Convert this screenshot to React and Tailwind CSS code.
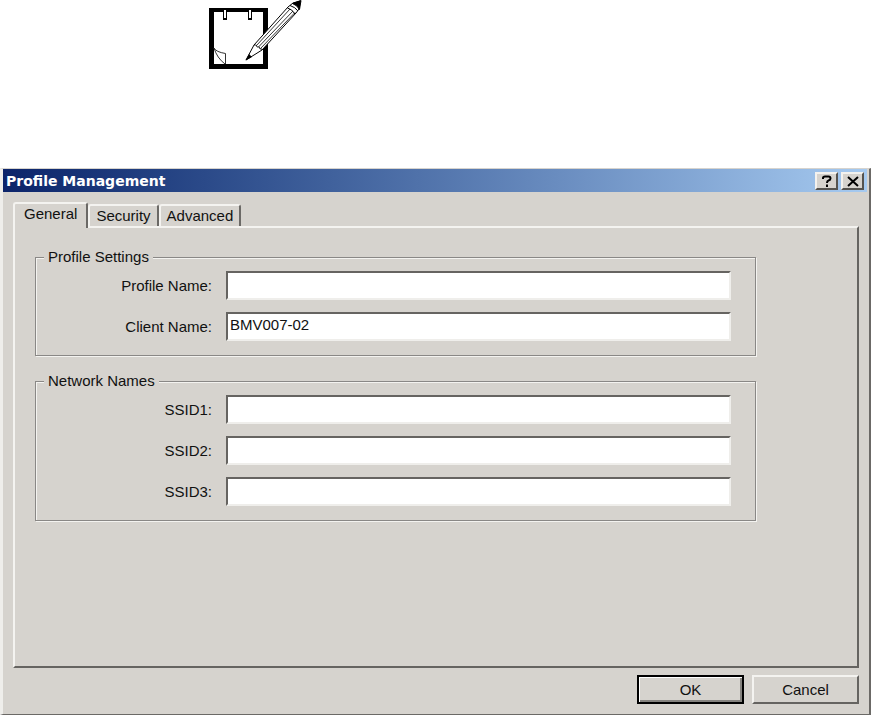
import { useState } from "react";

const TABS = ["General", "Security", "Advanced"];

function NotepadIcon() {
  return (
    <svg
      className="block h-[75px] w-[110px]"
      viewBox="0 0 110 75"
      fill="none"
      aria-hidden="true"
    >
      {/* pad */}
      <path d="M9 8H68V69H9ZM14 12V64H63V12Z" fill="#000" fillRule="evenodd" />
      {/* rings */}
      {[25, 50].map((x) => (
        <g key={x}>
          <path d={`M${x - 1.5} 10V18M${x + 1.5} 10V19`} stroke="#000" />
          <path d={`M${x} 10V18`} stroke="#fff" strokeWidth="2" />
          <path d={`M${x - 2} 19H${x + 2}`} stroke="#000" strokeWidth="2" />
        </g>
      ))}
      {/* folded corner */}
      <path d="M14 48Q16 52 25.5 53.5V64M14 48Q17 58 25 64" stroke="#333" />
      {/* pencil */}
      <path d="M46 60L54 45L88 7L93 3L100 1L99 9L96 13L62 50Z" fill="#fff" stroke="#000" />
      <path d="M56.5 45.5L90 9M58.5 47L93 11M60.5 48.5L95 12.5M54 45Q57 44 57 47Q60 46 60 49Q62 48 62 50" stroke="#000" strokeWidth="0.8" />
      <path d="M87.5 8Q92 9 95 14M90 5.5Q95 7 98 11" stroke="#000" />
      <path d="M92.5 3.5L101 0.5L99.5 9.5Q97 5 92.5 3.5Z" fill="#000" stroke="#000" />
      <path d="M45.5 60.5L49 54L52 57Z" fill="#000" />
    </svg>
  );
}

function TitleButton({ label, children }) {
  return (
    <button
      type="button"
      aria-label={label}
      className="flex h-[18px] w-[23px] items-center justify-center border-2 border-t-[#f4f2ee] border-r-[#55534f] border-b-[#55534f] border-l-[#f4f2ee] bg-[#d6d3ce]"
    >
      {children}
    </button>
  );
}

function Tab({ label, active, onSelect }) {
  return (
    <button
      type="button"
      role="tab"
      aria-selected={active}
      onClick={onSelect}
      className={`rounded-t-[3px] border-2 border-b-0 border-t-[#f4f3f0] border-r-[#6b6966] border-l-[#f4f3f0] bg-[#d6d3ce] ${
        active ? "relative -mb-[2px] h-[26px] px-[9px] pb-1" : "h-[22px] px-[6px]"
      }`}
    >
      {label}
    </button>
  );
}

function Group({ title, children }) {
  return (
    <fieldset className="border border-[#8a8886] pr-6 shadow-[1px_1px_0_#f4f3f0,inset_1px_1px_0_#f4f3f0]">
      <legend className="ml-2 bg-[#d6d3ce] px-1 leading-4">{title}</legend>
      <div className="flex flex-col gap-3 pt-[6px] pb-[14px]">{children}</div>
    </fieldset>
  );
}

function Field({ id, label, defaultValue = "" }) {
  return (
    <div className="flex items-center gap-[14px]">
      <label htmlFor={id} className="w-44 shrink-0 text-right">
        {label}
      </label>
      <input
        id={id}
        type="text"
        defaultValue={defaultValue}
        className="h-[29px] min-w-0 flex-1 border-2 border-t-[#666461] border-r-[#efeeeb] border-b-[#efeeeb] border-l-[#666461] bg-white px-[2px] pb-1 outline-none"
      />
    </div>
  );
}

export default function App() {
  const [tab, setTab] = useState("General");

  return (
    <div className="flex min-h-screen flex-col bg-white font-['Liberation_Sans',Arial,sans-serif] text-[15px] leading-5 text-[#111]">
      <header className="h-[168px] pl-[200px]">
        <NotepadIcon />
      </header>

      <main className="mr-[2px] flex flex-1 flex-col border-t border-r-2 border-b border-l-3 border-t-[#d6d3ce] border-r-[#6b6966] border-b-[#6b6966] border-l-[#efeeeb] bg-[#d6d3ce]">
        <div className="mr-[2px] flex h-[23px] items-center gap-[3px] bg-linear-to-r from-[#0c246a] to-[#a6caf0] pr-[3px] pl-[3px]">
          <h1 className="flex-1 font-['DejaVu_Sans',Verdana,sans-serif] text-[14px] font-bold text-white">
            Profile Management
          </h1>
          <TitleButton label="Help">
            <svg className="h-3 w-3" viewBox="0 0 12 12" fill="none" stroke="#000" strokeWidth="2">
              <path d="M2 4V3Q2 1.5 4 1.5H7.5Q9.5 1.5 9.5 3.5Q9.5 5 7.5 5.5Q6 6 6 8M6 9.5V12" />
            </svg>
          </TitleButton>
          <TitleButton label="Close">
            <svg className="h-3 w-3" viewBox="0 0 12 12" fill="none" stroke="#000" strokeWidth="2">
              <path d="M1 2L11 11M11 2L1 11" />
            </svg>
          </TitleButton>
        </div>

        <div className="flex flex-1 flex-col p-[10px]">
          <div role="tablist" className="flex items-end">
            {TABS.map((name) => (
              <Tab
                key={name}
                label={name}
                active={name === tab}
                onSelect={() => setTab(name)}
              />
            ))}
          </div>

          <div
            role="tabpanel"
            aria-label={tab}
            className="flex flex-1 flex-col gap-[17px] border-2 border-t-[#f4f3f0] border-r-[#666461] border-b-[#666461] border-l-[#f4f3f0] pt-[21px] pr-[101px] pb-6 pl-5"
          >
            <Group title="Profile Settings">
              <Field id="profile-name" label="Profile Name:" />
              <Field id="client-name" label="Client Name:" defaultValue="BMV007-02" />
            </Group>
            <Group title="Network Names">
              <Field id="ssid1" label="SSID1:" />
              <Field id="ssid2" label="SSID2:" />
              <Field id="ssid3" label="SSID3:" />
            </Group>
          </div>

          <div className="flex justify-end gap-2 pt-[7px]">
            <button
              type="button"
              className="h-[29px] w-[107px] border-2 border-black bg-[#d6d3ce] shadow-[inset_1px_1px_0_#fff,inset_-2px_-2px_0_#85837f]"
            >
              OK
            </button>
            <button
              type="button"
              className="h-[29px] w-[107px] border-2 border-t-[#f4f3f0] border-r-[#666461] border-b-[#666461] border-l-[#f4f3f0] bg-[#d6d3ce]"
            >
              Cancel
            </button>
          </div>
        </div>
      </main>
    </div>
  );
}
